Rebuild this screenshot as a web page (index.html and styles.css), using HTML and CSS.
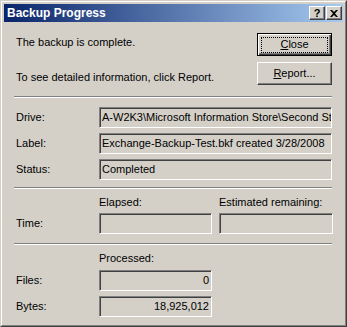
FILE: index.html
```html
<!DOCTYPE html>
<html>
<head>
<meta charset="utf-8">
<title>Backup Progress</title>
<link rel="stylesheet" href="styles.css">
</head>
<body>
<div class="window">
  <div class="frame">
    <div class="titlebar">
      <span class="title">Backup Progress</span>
      <span class="capbtn help">?</span>
      <span class="capbtn close">
        <svg width="8" height="7" viewBox="0 0 8 7"><path d="M0 0h2l2 2 2-2h2L5 3.5 8 7H6L4 5 2 7H0l3-3.5z" fill="#000"/></svg>
      </span>
    </div>
    <div class="content">
      <div class="top">
        <div class="msgs">
          <div class="msg1">The backup is complete.</div>
          <div class="msg2">To see detailed information, click Report.</div>
        </div>
        <div class="btns">
          <div class="btn default"><span class="focus"><u>C</u>lose</span></div>
          <div class="btn"><span><u>R</u>eport...</span></div>
        </div>
      </div>

      <div class="sep"></div>

      <div class="info">
        <div class="lbl">Drive:</div>
        <div class="field">A-W2K3\Microsoft Information Store\Second St</div>
        <div class="lbl">Label:</div>
        <div class="field">Exchange-Backup-Test.bkf created 3/28/2008</div>
        <div class="lbl">Status:</div>
        <div class="field">Completed</div>
      </div>

      <div class="sep"></div>

      <div class="time">
        <div></div>
        <div class="cap">Elapsed:</div>
        <div class="cap c3">Estimated remaining:</div>
        <div class="lbl">Time:</div>
        <div class="field"></div>
        <div class="field c3"></div>
      </div>

      <div class="sep"></div>

      <div class="proc">
        <div></div>
        <div class="cap">Processed:</div>
        <div class="lbl">Files:</div>
        <div class="field num">0</div>
        <div class="lbl">Bytes:</div>
        <div class="field num">18,925,012</div>
      </div>
    </div>
  </div>
</div>
</body>
</html>
```
FILE: styles.css
```css
body {
  margin: 0;
  font-family: "Liberation Sans", Arial, sans-serif;
  font-size: 11px;
  line-height: 13px;
  color: #000;
  background: #d4d0c8;
}

/* window border */
.window {
  width: 347px;
  height: 327px;
  box-sizing: border-box;
  border: 1px solid;
  border-color: #d4d0c8 #404040 #404040 #d4d0c8;
}

.frame {
  height: 100%;
  box-sizing: border-box;
  border: 1px solid;
  border-color: #fff #808080 #808080 #fff;
  padding: 2px;
  background: #d4d0c8;
}

/* title bar */
.titlebar {
  height: 18px;
  display: flex;
  align-items: center;
  background: linear-gradient(to right, #0a246a, #a6caf0);
  padding: 0 1px 0 2px;
}

.title {
  flex: 1;
  color: #fff;
  font-weight: bold;
  font-size: 12px;
  padding-left: 1px;
}

.capbtn {
  width: 16px;
  height: 14px;
  box-sizing: border-box;
  background: #d4d0c8;
  border: 1px solid;
  border-color: #fff #404040 #404040 #fff;
  box-shadow: inset -1px -1px #808080;
  display: flex;
  align-items: center;
  justify-content: center;
  font-weight: bold;
  font-size: 11px;
  line-height: 1;
}

.capbtn.close {
  margin-left: 1px;
}

/* content */
.content {
  padding: 0 11px 0 12px;
}

.top {
  display: flex;
  justify-content: space-between;
  height: 69px;
  padding-top: 11px;
  box-sizing: border-box;
}

.msgs {
  padding-top: 3px;
}

.msg2 {
  margin-top: 22px;
}

.btns {
  display: flex;
  flex-direction: column;
  gap: 6px;
}

.btn {
  width: 75px;
  height: 23px;
  box-sizing: border-box;
  border: 1px solid;
  border-color: #fff #404040 #404040 #fff;
  box-shadow: inset -1px -1px #808080;
  display: flex;
  align-items: center;
  justify-content: center;
}

.btn.default {
  border: 1px solid #000;
  box-shadow: inset 1px 1px #fff, inset -1px -1px #404040, inset -2px -2px #808080;
}

.focus {
  outline: 1px dotted #000;
  width: 65px;
  height: 14px;
  display: flex;
  align-items: center;
  justify-content: center;
}

/* etched separator */
.sep {
  height: 0;
  border-top: 1px solid #808080;
  border-bottom: 1px solid #fff;
  margin: 5px 0 0 -2px;
}

.lbl {
  align-self: center;
}

.field {
  height: 21px;
  box-sizing: border-box;
  border: 1px solid;
  border-color: #808080 #fff #fff #808080;
  box-shadow: inset 1px 1px #404040;
  padding: 0 0 0 2px;
  line-height: 19px;
  white-space: nowrap;
  overflow: hidden;
}

.field.num {
  text-align: right;
  padding-right: 2px;
}

.info {
  display: grid;
  grid-template-columns: 83px 233px;
  row-gap: 5px;
  padding: 9px 0 2px;
}

.time {
  display: grid;
  grid-template-columns: 83px 113px 121px;
  padding: 7px 0 4px;
}

.time .c3 {
  margin-left: 7px;
}

.time .cap {
  padding-bottom: 4px;
}

.proc {
  display: grid;
  grid-template-columns: 83px 113px;
  row-gap: 5px;
  padding: 7px 0 0;
}
```
